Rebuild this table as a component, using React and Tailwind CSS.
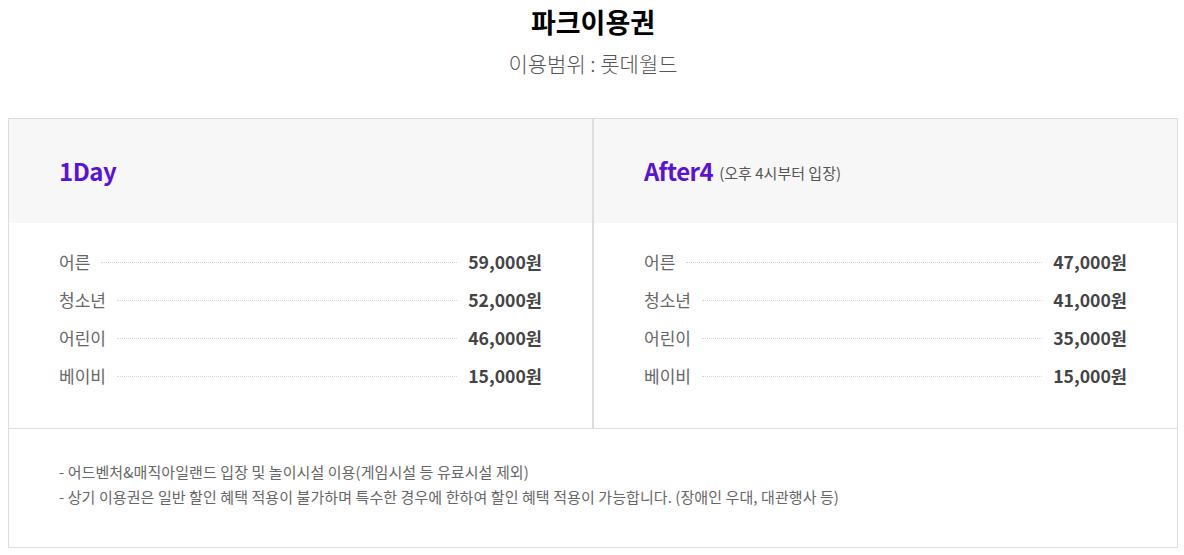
import React from "react";

const FONT = { fontFamily: '"Noto Sans CJK KR", "Noto Sans", sans-serif' };

const tickets = [
  {
    title: "1Day",
    sub: null,
    prices: [
      ["어른", "59,000원"],
      ["청소년", "52,000원"],
      ["어린이", "46,000원"],
      ["베이비", "15,000원"],
    ],
  },
  {
    title: "After4",
    sub: "(오후 4시부터 입장)",
    prices: [
      ["어른", "47,000원"],
      ["청소년", "41,000원"],
      ["어린이", "35,000원"],
      ["베이비", "15,000원"],
    ],
  },
];

function TicketColumn({ ticket, last }) {
  return (
    <div className={`flex-1 flex flex-col ${last ? "border-l border-[#dddddd]" : "border-r border-[#dddddd]"}`}>
      <div className="h-[104px] bg-[#f7f7f7] flex items-center px-[50px]">
        <span className="text-[24px] font-bold text-[#5b12d8] tracking-[-0.5px]">{ticket.title}</span>
        {ticket.sub && <span className="ml-[6px] mt-[4px] text-[15px] text-[#555555]">{ticket.sub}</span>}
      </div>
      <ul className="px-[50px] pt-[20px] pb-[33px] bg-white">
        {ticket.prices.map(([label, price]) => (
          <li key={label} className="h-[38px] flex items-center">
            <span className="text-[17px] text-[#666666]">{label}</span>
            <span className="flex-1 mx-[11px] border-t border-dotted border-[#d6d6d6]" />
            <span className="text-[17.6px] font-bold text-[#444444]">{price}</span>
          </li>
        ))}
      </ul>
    </div>
  );
}

export default function App() {
  return (
    <div className="bg-white min-h-[555px] pl-[8px]" style={FONT}>
      <div className="w-[1170px] text-center pt-[3px]">
        <h1 className="text-[27px] font-bold text-black leading-[38px]">파크이용권</h1>
        <p className="text-[21px] font-light text-[#555555] leading-[30px] mt-[7px]">이용범위 : 롯데월드</p>
      </div>
      <div className="w-[1170px] mt-[40px] border border-[#dddddd]">
        <div className="flex border-b border-[#dddddd]">
          {tickets.map((t, i) => (
            <TicketColumn key={t.title} ticket={t} last={i === 1} />
          ))}
        </div>
        <div className="px-[50px] pt-[30px] pb-[38px] text-[15px] text-[#666666] leading-[25px] tracking-[0.08px]">
          <p>- 어드벤처&amp;매직아일랜드 입장 및 놀이시설 이용(게임시설 등 유료시설 제외)</p>
          <p>- 상기 이용권은 일반 할인 혜택 적용이 불가하며 특수한 경우에 한하여 할인 혜택 적용이 가능합니다. (장애인 우대, 대관행사 등)</p>
        </div>
      </div>
    </div>
  );
}
